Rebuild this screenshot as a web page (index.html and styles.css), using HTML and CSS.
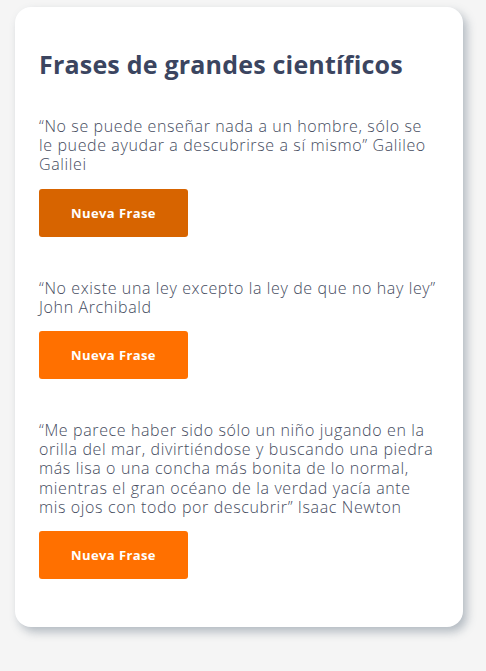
FILE: index.html
```html
<!DOCTYPE html>
<html lang="es">
<head>
<meta charset="utf-8">
<title>Frases de grandes científicos</title>
<link rel="stylesheet" href="styles.css">
</head>
<body>
<main class="card">
  <h1 class="title">Frases de grandes científicos</h1>
  <section class="quote">
    <p class="quote-text">“No se puede enseñar nada a un hombre, sólo se le puede ayudar a descubrirse a sí mismo” Galileo Galilei</p>
    <button class="btn btn-active">Nueva Frase</button>
  </section>
  <section class="quote">
    <p class="quote-text">“No existe una ley excepto la ley de que no hay ley” John Archibald</p>
    <button class="btn">Nueva Frase</button>
  </section>
  <section class="quote">
    <p class="quote-text">“Me parece haber sido sólo un niño jugando en la orilla del mar, divirtiéndose y buscando una piedra más lisa o una concha más bonita de lo normal, mientras el gran océano de la verdad yacía ante mis ojos con todo por descubrir” Isaac Newton</p>
    <button class="btn">Nueva Frase</button>
  </section>
</main>
</body>
</html>
```
FILE: styles.css
```css
html, body {
  margin: 0;
  padding: 0;
}
body {
  background: #f5f5f5;
  font-family: "Open Sans", "Liberation Sans", sans-serif;
  padding: 7px 0 0 15px;
  min-height: 671px;
  box-sizing: border-box;
}
.card {
  width: 448px;
  box-sizing: border-box;
  background: #ffffff;
  border-radius: 16px;
  padding: 41px 24px 48px 24px;
  box-shadow: 4px 5px 10px rgba(100, 115, 130, 0.45);
}
.title {
  margin: 0 0 37px 0;
  font-size: 25px;
  line-height: 32px;
  font-weight: 700;
  color: #3b4560;
  letter-spacing: 0.2px;
}
.quote {
  margin-bottom: 42px;
}
.quote:last-child {
  margin-bottom: 0;
}
.quote-text {
  margin: 0 0 14px 0;
  font-size: 16px;
  line-height: 19.2px;
  font-weight: 300;
  color: #454c60;
  letter-spacing: 0.62px;
}
.btn {
  display: block;
  width: 149px;
  height: 48px;
  border: none;
  border-radius: 3px;
  background: #ff7000;
  color: #ffffff;
  font-family: "Open Sans", "Liberation Sans", sans-serif;
  font-size: 13px;
  font-weight: 700;
  letter-spacing: 0.4px;
  cursor: pointer;
}
.btn-active {
  background: #d76400;
}
```
